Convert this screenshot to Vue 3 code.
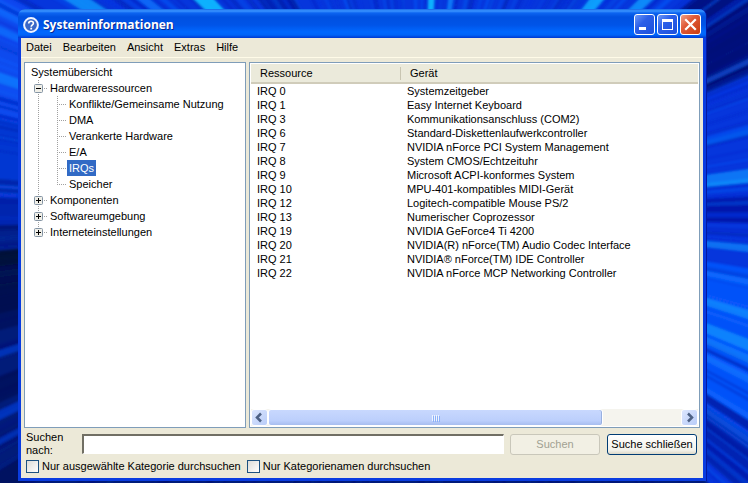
<script setup>
import { computed, ref } from 'vue'

const menus = ['Datei', 'Bearbeiten', 'Ansicht', 'Extras', 'Hilfe']

const tree = ref([
  {
    name: 'Hardwareressourcen',
    open: true,
    children: ['Konflikte/Gemeinsame Nutzung', 'DMA', 'Verankerte Hardware', 'E/A', 'IRQs', 'Speicher'],
  },
  { name: 'Komponenten', open: false, children: [] },
  { name: 'Softwareumgebung', open: false, children: [] },
  { name: 'Interneteinstellungen', open: false, children: [] },
])
const selected = ref('IRQs')

const resources = [
  ['IRQ 0', 'Systemzeitgeber'],
  ['IRQ 1', 'Easy Internet Keyboard'],
  ['IRQ 3', 'Kommunikationsanschluss (COM2)'],
  ['IRQ 6', 'Standard-Diskettenlaufwerkcontroller'],
  ['IRQ 7', 'NVIDIA nForce PCI System Management'],
  ['IRQ 8', 'System CMOS/Echtzeituhr'],
  ['IRQ 9', 'Microsoft ACPI-konformes System'],
  ['IRQ 10', 'MPU-401-kompatibles MIDI-Gerät'],
  ['IRQ 12', 'Logitech-compatible Mouse PS/2'],
  ['IRQ 13', 'Numerischer Coprozessor'],
  ['IRQ 19', 'NVIDIA GeForce4 Ti 4200'],
  ['IRQ 20', 'NVIDIA(R) nForce(TM) Audio Codec Interface'],
  ['IRQ 21', 'NVIDIA® nForce(TM) IDE Controller'],
  ['IRQ 22', 'NVIDIA nForce MCP Networking Controller'],
]

const query = ref('')
const onlyCategory = ref(false)
const onlyNames = ref(false)

// Wallpaper: light rays that leave one point behind the window.
const cx = 420
const cy = 215
function ray(x, y, spread, color, opacity = 1) {
  const a = Math.atan2(y - cy, x - cx)
  const d = spread / Math.hypot(x - cx, y - cy) / 2
  const p = (t) => `${Math.round(cx + 900 * Math.cos(t))},${Math.round(cy + 900 * Math.sin(t))}`
  return { points: `${cx},${cy} ${p(a - d)} ${p(a + d)}`, color, opacity }
}
const rays = computed(() => {
  const broad = [
    ray(10, 60, 110, '#0a4cf0', 0.9), ray(10, 150, 60, '#0838d0', 0.8),
    ray(10, 205, 50, '#0626a8', 0.9),
    ray(740, 25, 100, '#050c78', 0.9), ray(740, 210, 26, '#0414a0', 0.8),
    ray(740, 450, 60, '#0620a0', 0.7), ray(726, 330, 130, '#0654fc', 0.9),
    ray(280, 4, 30, '#0420a8', 0.8),
  ]
  const fine = []
  let seed = 11
  const rnd = () => (seed = (seed * 16807) % 2147483647) / 2147483647
  const palette = ['#0a60ff', '#0a34e8', '#0420b8', '#0c6cff', '#0828cc', '#0414a0']
  for (let i = 0; i < 420; i++) {
    const t = rnd() * Math.PI * 2
    fine.push(ray(cx + 350 * Math.cos(t), cy + 350 * Math.sin(t), 1 + rnd() * 4,
      palette[Math.floor(rnd() * palette.length)], 0.2 + rnd() * 0.35))
  }
  const shade = [
    ray(10, 245, 40, '#010c58', 0.6), ray(10, 280, 60, '#010820', 0.75), ray(10, 310, 34, '#010c58', 0.6),
    ray(10, 385, 24, '#010c50', 0.6), ray(10, 478, 24, '#010a50', 0.6),
    ray(340, 482, 620, '#020a50', 0.7), ray(745, 40, 60, '#050a70', 0.5),
  ]
  const bright = [
    ray(85, 4, 14, '#109cff', 0.8), ray(150, 4, 8, '#0c7cff', 0.7), ray(210, 5, 14, '#10b8ff', 0.95),
    ray(431, 5, 6, '#10b8ff', 0.95), ray(450, 5, 5, '#0c90ff', 0.7),
    ray(592, 5, 11, '#10a8ff', 0.9), ray(640, 5, 10, '#109cff', 0.8),
    ray(12, 82, 10, '#0c80ff', 0.7), ray(12, 36, 8, '#0c78ff', 0.6), ray(12, 18, 6, '#0c70ff', 0.6),
    ray(726, 72, 5, '#0c70ff', 0.5), ray(726, 138, 5, '#0c78ff', 0.5),
    ray(726, 183, 4, '#0c9cff', 0.7), ray(726, 178, 12, '#0c90ff', 0.7),
    ray(726, 246, 7, '#0c8cff', 0.7), ray(726, 277, 5, '#0c78ff', 0.6),
    ray(726, 308, 8, '#0c98ff', 0.65), ray(726, 336, 10, '#0c9cff', 0.65), ray(726, 349, 7, '#0c8cff', 0.6),
    ray(726, 368, 6, '#0c7cff', 0.6), ray(726, 402, 5, '#0c70ff', 0.5), ray(726, 425, 5, '#0c70ff', 0.5),
    ray(10, 350, 7, '#0848e0', 0.6), ray(10, 410, 8, '#0848e8', 0.6), ray(10, 436, 6, '#0848e8', 0.5),
  ]
  return [...broad, ...fine, ...shade, ...bright]
})
</script>

<template>
  <div class="desktop">
    <svg class="wallpaper" viewBox="0 0 748 483" preserveAspectRatio="xMidYMid slice" aria-hidden="true">
      <defs>
        <filter id="soft" x="0" y="0" width="100%" height="100%" filterUnits="userSpaceOnUse">
          <feGaussianBlur stdDeviation="1" />
        </filter>
      </defs>
      <rect width="748" height="483" fill="#0636dc" />
      <g filter="url(#soft)">
        <polygon v-for="(r, i) in rays" :key="i" :points="r.points" :fill="r.color" :opacity="r.opacity" />
      </g>
    </svg>

    <main class="window">
      <header class="titlebar">
        <svg class="help" viewBox="0 0 16 16" aria-hidden="true">
          <circle cx="8" cy="8" r="6.900" fill="#3a68c8" stroke="#f0f4ff" stroke-width="2" />
          <path d="M5.700 6.500C5.700 5 6.600 4.200 8 4.200s2.400.8 2.400 2c0 1.600-2.200 1.800-2.200 3.500" fill="none" stroke="#fff" stroke-width="1.600" />
          <rect x="7.300" y="10.700" width="1.800" height="1.800" fill="#fff" />
        </svg>
        <h1>Systeminformationen</h1>
        <div class="controls">
          <button class="control" aria-label="Minimieren">
            <svg viewBox="0 0 21 21"><rect x="5" y="13" width="7" height="3" fill="#fff" /></svg>
          </button>
          <button class="control" aria-label="Maximieren">
            <svg viewBox="0 0 21 21"><path d="M5 5h11v11H5zM6 8v7h9V8z" fill="#fff" fill-rule="evenodd" /></svg>
          </button>
          <button class="control close" aria-label="Schließen">
            <svg viewBox="0 0 21 21"><path d="M6 6l9 9M15 6l-9 9" stroke="#fff" stroke-width="2.200" stroke-linecap="square" /></svg>
          </button>
        </div>
      </header>

      <div class="client">
        <nav class="menubar">
          <button v-for="m in menus" :key="m">{{ m }}</button>
        </nav>

        <div class="panes">
          <section class="pane tree">
            <div class="root">Systemübersicht</div>
            <ul>
              <li v-for="(node, i) in tree" :key="node.name">
                <div class="row">
                  <button class="toggle" :aria-label="node.name" :aria-expanded="node.open" @click="node.open = !node.open">
                    <svg class="cell" viewBox="0 0 19 16">
                      <path :d="i < tree.length - 1 ? 'M9.500 0V16' : 'M9.500 0V8'" class="guide" />
                      <path d="M9 8.500H18" class="guide" />
                      <rect x="5.500" y="4.500" width="8" height="8" rx="1" fill="#f0efe8" stroke="#8494a4" />
                      <path :d="node.open ? 'M7 8.500h5' : 'M7 8.500h5M9.500 6v5'" stroke="#000" />
                    </svg>
                  </button>
                  <span class="label">{{ node.name }}</span>
                </div>
                <ul v-if="node.open && node.children.length">
                  <li v-for="(child, k) in node.children" :key="child" class="row">
                    <svg class="cell" viewBox="0 0 19 16"><path d="M9.500 0V16" class="guide" /></svg>
                    <svg class="cell" viewBox="0 0 19 16">
                      <path :d="k < node.children.length - 1 ? 'M9.500 0V16' : 'M9.500 0V8'" class="guide" />
                      <path d="M9 8.500H18" class="guide" />
                    </svg>
                    <button class="label" :class="{ selected: child === selected }" @click="selected = child">{{ child }}</button>
                  </li>
                </ul>
              </li>
            </ul>
          </section>

          <section class="pane list">
            <div class="scroller">
              <table>
                <thead>
                  <tr><th class="first">Ressource</th><th>Gerät</th></tr>
                </thead>
                <tbody>
                  <tr v-for="r in resources" :key="r[0]"><td>{{ r[0] }}</td><td>{{ r[1] }}</td></tr>
                </tbody>
              </table>
            </div>
            <div class="scrollbar">
              <button class="arrow" aria-label="Nach links">
                <svg viewBox="0 0 17 17"><path d="M10 4.500L6 8.500l4 4" fill="none" stroke="#4d6185" stroke-width="2.500" /></svg>
              </button>
              <div class="track"><div class="thumb"><i></i><i></i><i></i><i></i></div></div>
              <button class="arrow" aria-label="Nach rechts">
                <svg viewBox="0 0 17 17"><path d="M7 4.500l4 4-4 4" fill="none" stroke="#4d6185" stroke-width="2.500" /></svg>
              </button>
            </div>
          </section>
        </div>

        <form class="search" @submit.prevent>
          <div class="line">
            <label class="caption" for="query">Suchen nach:</label>
            <input id="query" v-model="query" class="query" type="text" />
            <button class="push" type="submit" disabled>Suchen</button>
            <button class="push focus" type="button">Suche schließen</button>
          </div>
          <div class="checks">
            <label><input v-model="onlyCategory" type="checkbox" />Nur ausgewählte Kategorie durchsuchen</label>
            <label><input v-model="onlyNames" type="checkbox" />Nur Kategorienamen durchsuchen</label>
          </div>
        </form>
      </div>
    </main>
  </div>
</template>

<style>
body {
  margin: 0;
}
</style>

<style scoped>
* {
  box-sizing: border-box;
}
.desktop {
  position: relative;
  display: flex;
  min-height: 100vh;
  padding: 9px 42px 2px 18px;
  overflow: hidden;
  font: 11px/14px "Liberation Sans", Arial, sans-serif;
  color: #000;
}
.wallpaper {
  position: absolute;
  inset: 0;
  width: 100%;
  height: 100%;
}
button {
  margin: 0;
  padding: 0;
  border: 0;
  background: none;
  font: inherit;
  color: inherit;
}
ul {
  margin: 0;
  padding: 0;
  list-style: none;
}
.window {
  position: relative;
  flex: 1;
  display: flex;
  flex-direction: column;
  min-width: 0;
  border: solid #0a3ce0;
  border-width: 0 3px 3px;
  border-radius: 7px 7px 0 0;
  background: #0a3ce0;
  box-shadow: 1px 0 0 #0418a0;
}
.titlebar {
  display: flex;
  align-items: center;
  gap: 4px;
  height: 29px;
  margin: 0 -3px;
  padding: 2px 5px 0 5px;
  border-radius: 7px 7px 0 0;
  background: linear-gradient(#1468e8 0, #3a94ff 2px, #0c64f0 4px, #0050e0 8px, #0054e8 16px, #0068ff 23px, #0064f8 26px, #0038d0 29px);
}
.help {
  width: 16px;
  height: 16px;
}
h1 {
  flex: 1;
  margin: 0;
  font: bold 12px/16px "Open Sans", sans-serif;
  color: #fff;
  text-shadow: 1px 1px 0 #0a2a90;
}
.controls {
  display: flex;
  gap: 2px;
}
.control {
  width: 21px;
  height: 21px;
  border: 1px solid #fff;
  border-radius: 3px;
  background: linear-gradient(135deg, #6c98f8, #2c5fe8 40%, #1c50dc);
}
.control svg {
  display: block;
  width: 21px;
  height: 21px;
  margin: -1px;
}
.close {
  background: linear-gradient(135deg, #f0a088, #e05a38 40%, #c83c10);
}
.client {
  flex: 1;
  display: flex;
  flex-direction: column;
  background: #ece9d8;
}
.menubar {
  display: flex;
  gap: 11px;
  height: 20px;
  padding: 0 5px 1px;
  border-bottom: 1px solid #fffbe8;
}
.panes {
  flex: 1;
  display: flex;
  gap: 3px;
  padding: 4px 3px 0;
}
.pane {
  border: 1px solid #7f9db9;
  background: #fff;
}
.tree {
  flex: 0 0 222px;
  padding: 1px 4px;
  line-height: 16px;
}
.root {
  padding-left: 2px;
}
.row {
  display: flex;
  height: 16px;
}
.cell {
  display: block;
  width: 19px;
  height: 16px;
}
.guide {
  fill: none;
  stroke: #a0a0a0;
  stroke-dasharray: 1 1;
}
.label {
  padding: 0 2px;
  white-space: nowrap;
}
.selected {
  background: #316ac5;
  color: #fff;
}
.list {
  flex: 1;
  display: flex;
  flex-direction: column;
  min-width: 0;
  padding: 1px;
}
.scroller {
  flex: 1;
  overflow: hidden;
}
table {
  width: 100%;
  border-collapse: collapse;
  table-layout: fixed;
}
th {
  height: 19px;
  padding: 0 9px;
  border-bottom: 2px solid #d0ccba;
  background: #ebeadb;
  font-weight: normal;
  text-align: left;
}
.first {
  width: 150px;
  background: linear-gradient(#c8c5b2, #c8c5b2) right 0 center / 1px 13px no-repeat #ebeadb;
}
td {
  height: 14px;
  padding: 0 6px;
  white-space: nowrap;
}
.scrollbar {
  display: flex;
  height: 17px;
  background: #f5f4ee;
}
.arrow {
  width: 17px;
  border: 1px solid #fff;
  border-radius: 3px;
  background: linear-gradient(135deg, #dce6fe, #b8ccf8);
}
.arrow svg {
  display: block;
  width: 17px;
  height: 17px;
  margin: -1px;
}
.track {
  flex: 1;
}
.thumb {
  display: flex;
  align-items: center;
  justify-content: center;
  gap: 1px;
  width: 81%;
  height: 17px;
  border: 1px solid #fff;
  border-radius: 3px;
  background: linear-gradient(#c8d8fe, #bccffc 70%, #a8bef0);
  box-shadow: inset -1px 0 0 #98b0e0;
}
.thumb i {
  width: 1px;
  height: 6px;
  background: #eef4fe;
  box-shadow: 1px 1px 0 #8cb0f8;
}
.search {
  padding: 3px 6px 5px 5px;
}
.line {
  display: flex;
  align-items: center;
}
.caption {
  width: 56px;
  padding-right: 12px;
  line-height: 13px;
}
.query {
  flex: 1;
  min-width: 0;
  height: 20px;
  margin-right: 6px;
  border: 1px solid #fff;
  border-top: 2px solid #716f64;
  border-left: 2px solid #716f64;
  background: #fff;
  font: inherit;
}
.push {
  width: 90px;
  height: 21px;
  border: 1px solid #003c74;
  border-radius: 3px;
  background: linear-gradient(#fff, #f2f1ea 80%, #dcd8c8);
}
.push:disabled {
  border-color: #c9c7ba;
  background: #f2f0e4;
  color: #a1a192;
}
.focus {
  margin-left: 7px;
}
.checks {
  display: flex;
  gap: 6px;
  padding-top: 2px;
}
.checks label {
  display: flex;
  align-items: center;
  gap: 3px;
}
.checks input {
  appearance: none;
  width: 13px;
  height: 13px;
  margin: 0;
  border: 1px solid #1c5180;
  background: linear-gradient(135deg, #dcdcd7, #fff);
}
.checks input:checked {
  box-shadow: inset 0 0 0 3px #fff, inset 0 0 0 7px #21a121;
}
</style>
